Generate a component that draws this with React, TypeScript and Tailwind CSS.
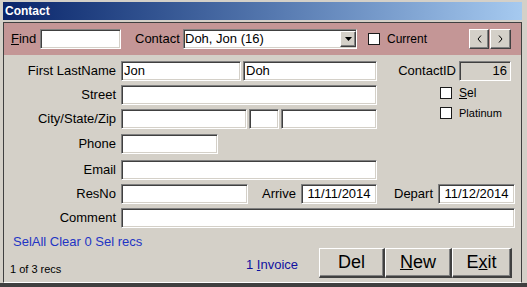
import React from "react";

const sunkEdge =
  "border border-t-[#808080] border-l-[#808080] border-b-white border-r-white shadow-[inset_1px_1px_0_#404040,inset_-1px_-1px_0_#d4d0c8]";
const sunk = `bg-white ${sunkEdge}`;
const raised =
  "bg-[#d4d0c8] border border-t-white border-l-white border-b-[#404040] border-r-[#404040] shadow-[inset_-1px_-1px_0_#808080]";

const Box = ({ w, children, className = "" }: { w: string; children?: React.ReactNode; className?: string }) => (
  <div className={`${sunk} ${w} h-[20px] flex items-center px-[2px] text-[13px] ${className}`}>{children}</div>
);

const Check = () => (
  <div className="w-[12px] h-[12px] bg-white border border-[#1a1a1a] shrink-0" />
);

const Label = ({ children }: { children: React.ReactNode }) => (
  <div className="w-[113px] pr-[1px] text-right text-[13px] shrink-0">{children}</div>
);

const App = () => {
  return (
    <div className="w-[527px] h-[287px] bg-[#d4d0c8] flex flex-col pt-[2px] pl-[3px] pr-[5px] border-b-[4px] border-b-[#404040] font-['Liberation_Sans',Arial,sans-serif] text-black overflow-hidden">
      <div className="h-[18px] shrink-0 bg-linear-to-r from-[#0a246a] to-[#a6caf0] text-white font-bold text-[12px] pl-[2px] flex items-center">
        Contact
      </div>
      <div className="mt-[2px] flex-1 flex flex-col border border-t-[#404040] border-l-[#404040] border-r-[#404040] border-b-white">
        {/* toolbar */}
        <div className="h-[32px] shrink-0 bg-[#c49696] flex items-center">
          <span className="w-[36px] pl-[7px] text-[13px]">
            <u>F</u>ind
          </span>
          <div className={`${sunk} w-[81px] h-[20px]`} />
          <span className="ml-[14px] w-[48px] text-[13px]">Contact</span>
          <div className={`${sunk} w-[174px] h-[20px] flex items-center`}>
            <span className="flex-1 pl-[1px] text-[13px]">Doh, Jon (16)</span>
            <div className={`${raised} w-[16px] h-[16px] flex items-center justify-center`}>
              <svg width="7" height="4" viewBox="0 0 7 4">
                <path d="M0 0h7L3.5 4z" fill="#000" />
              </svg>
            </div>
          </div>
          <div className="ml-[11px]">
            <Check />
          </div>
          <span className="ml-[7px] text-[12px]">Current</span>
          <div className="ml-auto mr-[10px] flex">
            <div className={`${raised} w-[20px] h-[20px] flex items-center justify-center`}>
              <svg width="5" height="8" viewBox="0 0 5 8">
                <path d="M4 0.5L1 4l3 3.5" fill="none" stroke="#000" strokeWidth="1" />
              </svg>
            </div>
            <div className={`${raised} ml-[1px] w-[21px] h-[20px] flex items-center justify-center`}>
              <svg width="5" height="8" viewBox="0 0 5 8">
                <path d="M1 0.5L4 4l-3 3.5" fill="none" stroke="#000" strokeWidth="1" />
              </svg>
            </div>
          </div>
        </div>

        {/* body */}
        <div className="flex-1 flex flex-col">
          <div className="flex mt-[6px]">
            <div className="w-[373px] flex flex-col">
              <div className="flex items-center gap-[4px]">
                <Label>First LastName</Label>
                <Box w="w-[120px]">Jon</Box>
                <Box w="w-[134px]" className="ml-[-2px]">Doh</Box>
              </div>
              <div className="flex items-center gap-[4px] mt-[4px]">
                <Label>Street</Label>
                <Box w="w-[256px]" />
              </div>
              <div className="flex items-center gap-[4px] mt-[4px]">
                <Label>City/State/Zip</Label>
                <Box w="w-[126px]" />
                <Box w="w-[30px]" className="ml-[-2px]" />
                <Box w="w-[96px]" className="ml-[-2px]" />
              </div>
              <div className="flex items-center gap-[4px] mt-[5px]">
                <Label>Phone</Label>
                <Box w="w-[97px]" />
              </div>
            </div>
            <div className="flex-1 flex flex-col">
              <div className="flex items-center justify-end pr-[10px] h-[20px]">
                <span className="text-[13px] mr-[3px]">ContactID</span>
                <div className={`bg-[#d4d0c8] ${sunkEdge} w-[52px] h-[20px] flex items-center justify-end pr-[3px] text-[13px]`}>
                  16
                </div>
              </div>
              <div className="flex items-center mt-[6px] pl-[63px]">
                <Check />
                <span className="ml-[7px] text-[12px] leading-[12px]">
                  <u>S</u>el
                </span>
              </div>
              <div className="flex items-center mt-[8px] pl-[63px]">
                <Check />
                <span className="ml-[7px] text-[11px] leading-[12px]">Platinum</span>
              </div>
            </div>
          </div>

          <div className="flex items-center gap-[4px] mt-[6px]">
            <Label>Email</Label>
            <Box w="w-[256px]" />
          </div>
          <div className="flex items-center gap-[4px] mt-[4px]">
            <Label>ResNo</Label>
            <Box w="w-[127px]" />
            <span className="ml-[10px] w-[35px] text-[13px]">Arrive</span>
            <Box w="w-[76px]" className="justify-center">11/11/2014</Box>
            <span className="ml-[13px] w-[40px] text-[13px]">Depart</span>
            <Box w="w-[77px]" className="justify-center">11/12/2014</Box>
          </div>
          <div className="flex items-center gap-[4px] mt-[4px]">
            <Label>Comment</Label>
            <Box w="w-[394px]" />
          </div>

          <div className="mt-[6px] pl-[9px] h-[15px] leading-[15px] text-[13px] text-[#1f35c4]">
            SelAll Clear 0 Sel recs
          </div>

          <div className="flex h-[30px] mt-[-1px]">
            <div className="w-[242px] pl-[6px] flex items-end pb-[1px] text-[11px]">1 of 3 recs</div>
            <div className="w-[73px] pt-[7px] text-[13px] text-[#1010a0]">
              1 <u>I</u>nvoice
            </div>
            <div className="flex">
              <div className={`${raised} w-[66px] h-[30px] flex items-center justify-center text-[18px] border-b-2 border-r-2`}>Del</div>
              <div className={`${raised} w-[67px] h-[30px] flex items-center justify-center text-[18px] border-b-2 border-r-2`}>
                <span>
                  <u>N</u>ew
                </span>
              </div>
              <div className={`${raised} w-[60px] h-[30px] flex items-center justify-center text-[18px] border-b-2 border-r-2`}>
                <span>
                  E<u>x</u>it
                </span>
              </div>
            </div>
          </div>
        </div>
      </div>
    </div>
  );
};

export default App;
